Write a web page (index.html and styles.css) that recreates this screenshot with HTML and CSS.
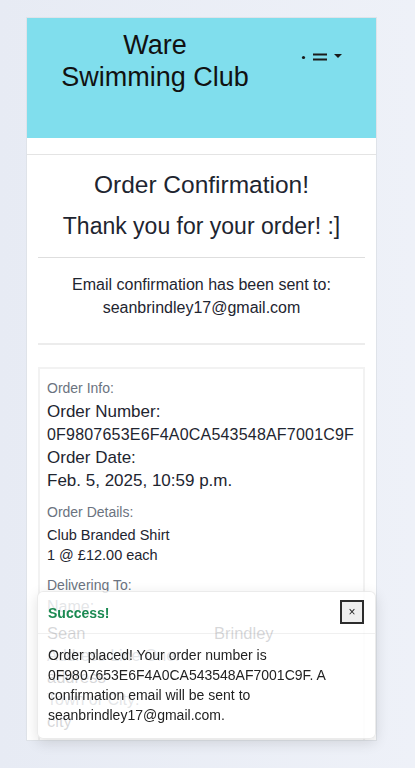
FILE: index.html
```html
<!DOCTYPE html>
<html lang="en">
<head>
<meta charset="utf-8">
<title>Order Confirmation</title>
<link rel="stylesheet" href="styles.css">
</head>
<body>
<div class="card">
  <header class="site-header">
    <div class="brand">Ware<br>Swimming Club</div>
    <div class="nav-toggle">
      <svg width="46" height="12" viewBox="0 0 46 12">
        <circle cx="4.5" cy="6.5" r="1.6" fill="#1a1a1a"/>
        <rect x="14" y="2.5" width="14" height="2" fill="#1a1a1a"/>
        <rect x="14" y="7.5" width="14" height="2" fill="#1a1a1a"/>
        <polygon points="35,3 43,3 39,7" fill="#1a1a1a"/>
      </svg>
    </div>
  </header>
  <div class="spacer"></div>
  <main class="content">
    <h1 class="title">Order Confirmation!</h1>
    <h2 class="thanks">Thank you for your order! :]</h2>
    <hr class="rule">
    <p class="email-note">Email confirmation has been sent to:<br>seanbrindley17@gmail.com</p>
    <hr class="rule thick">
    <section class="info-box">
      <div class="label">Order Info:</div>
      <div class="big first">Order Number:</div>
      <div class="big mono">0F9807653E6F4A0CA543548AF7001C9F</div>
      <div class="big">Order Date:</div>
      <div class="big">Feb. 5, 2025, 10:59 p.m.</div>
      <div class="label gap">Order Details:</div>
      <div class="small first-small">Club Branded Shirt</div>
      <div class="small">1 @ £12.00 each</div>
      <div class="label gap2">Delivering To:</div>
      <div class="field">Name:</div>
      <div class="two-col"><span class="val">Sean</span><span class="val">Brindley</span></div>
      <div class="field">Address Line One:</div>
      <div class="val">address</div>
      <div class="field">Town or City:</div>
      <div class="val">city</div>
    </section>
  </main>
</div>

<div class="toast">
  <div class="toast-header">
    <strong class="success">Success!</strong>
    <button class="close" type="button">×</button>
  </div>
  <div class="toast-body">Order placed! Your order number is 0F9807653E6F4A0CA543548AF7001C9F. A confirmation email will be sent to seanbrindley17@gmail.com.</div>
</div>
</body>
</html>
```

FILE: styles.css
```css
html, body {
  margin: 0;
  padding: 0;
}
body {
  font-family: "Liberation Sans", Arial, sans-serif;
  color: #1e2530;
  background: linear-gradient(90deg, #e7ebf4 0%, #eef1f8 100%);
  min-height: 768px;
}
.card {
  margin: 17px 0 0 26px;
  width: 351px;
  box-sizing: border-box;
  height: 724px;
  background: #fff;
  border: 1px solid #dfe3e9;
  overflow: hidden;
}
.site-header {
  background: #80deed;
  height: 120px;
  display: flex;
  align-items: flex-start;
  box-sizing: border-box;
  padding-top: 11px;
}
.brand {
  width: 256px;
  text-align: center;
  font-size: 27px;
  line-height: 32px;
  color: #111;
}
.nav-toggle {
  padding-top: 22px;
  padding-left: 16px;
}
.nav-toggle svg { display: block; }
.spacer {
  height: 16px;
  border-bottom: 1px solid #e4e4e4;
}
.content {
  padding: 0 11px 0 11px;
}
.title {
  margin: 15px 0 0;
  text-align: center;
  font-size: 24.5px;
  font-weight: normal;
  line-height: 29px;
}
.thanks {
  margin: 14px 0 0;
  text-align: center;
  font-size: 23px;
  font-weight: normal;
  line-height: 27px;
}
.rule {
  border: 0;
  border-top: 1px solid #dedede;
  margin: 17px 0 0;
}
.rule.thick {
  border-top: 2px solid #ececec;
  margin-top: 24px;
}
.email-note {
  margin: 15px 0 0;
  text-align: center;
  font-size: 16px;
  line-height: 23px;
}
.info-box {
  margin-top: 22px;
  border: 2px solid #f2f2f2;
  padding: 9px 7px 20px;
}
.label {
  font-size: 14px;
  line-height: 20px;
  color: #6b7380;
}
.label.gap { margin-top: 10px; }
.label.gap2 { margin-top: 10px; }
.big {
  font-size: 17px;
  line-height: 23px;
}
.big.first { margin-top: 2px; }
.big.mono {
  font-size: 16px;
  letter-spacing: 0.2px;
}
.small {
  font-size: 14.5px;
  line-height: 20px;
}
.small.first-small { margin-top: 3px; }
.field {
  font-size: 16px;
  line-height: 20px;
  color: #6b7380;
  margin-top: 2px;
}
.two-col {
  display: grid;
  grid-template-columns: 167px 1fr;
  margin-top: 5px;
}
.val {
  display: block;
  font-size: 16.5px;
  line-height: 22px;
}
.toast {
  position: fixed;
  left: 37px;
  top: 591px;
  width: 339px;
  height: 148px;
  box-sizing: border-box;
  background: rgba(255, 255, 255, 0.82);
  border: 1px solid rgba(0, 0, 0, 0.08);
  border-radius: 6px;
  box-shadow: 0 4px 14px rgba(0, 0, 0, 0.12);
  overflow: hidden;
}
.toast-header {
  display: flex;
  align-items: center;
  justify-content: space-between;
  height: 42px;
  box-sizing: border-box;
  padding: 0 11px 0 10px;
  border-bottom: 1px solid rgba(0, 0, 0, 0.06);
}
.success {
  color: #1b8a52;
  font-size: 14px;
  font-weight: bold;
}
.close {
  width: 24px;
  height: 24px;
  margin-top: -2px;
  padding: 0;
  border: 2px solid #2c2c2c;
  border-radius: 0;
  background: #eeeeee;
  font-family: "Liberation Sans", Arial, sans-serif;
  font-size: 12px;
  line-height: 18px;
  color: #222;
}
.toast-body {
  padding: 11px 10px 0;
  font-size: 14px;
  line-height: 20px;
  color: #222;
}
```
